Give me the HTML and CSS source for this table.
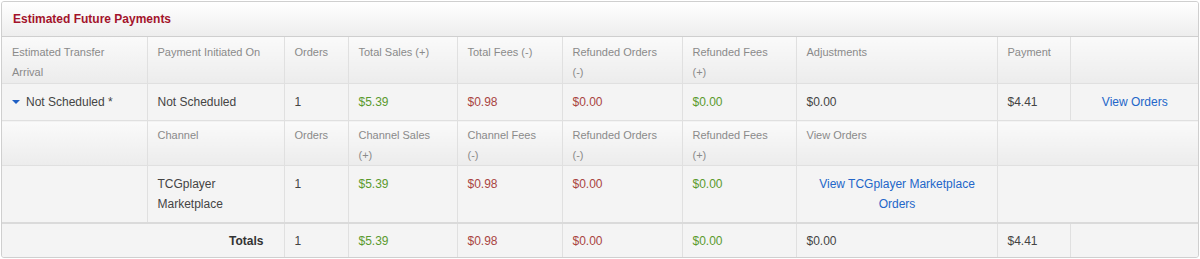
FILE: index.html
```html
<!DOCTYPE html>
<html>
<head>
<meta charset="utf-8">
<link rel="stylesheet" href="styles.css">
</head>
<body>
<div class="panel">
  <div class="panel-heading">Estimated Future Payments</div>
  <table class="payments">
    <colgroup>
      <col class="c1"><col class="c2"><col class="c3"><col class="c4"><col class="c5">
      <col class="c6"><col class="c7"><col class="c8"><col class="c9"><col class="c10">
    </colgroup>
    <tr class="head">
      <th>Estimated Transfer Arrival</th>
      <th>Payment Initiated On</th>
      <th>Orders</th>
      <th>Total Sales (+)</th>
      <th>Total Fees (-)</th>
      <th>Refunded Orders (-)</th>
      <th>Refunded Fees (+)</th>
      <th>Adjustments</th>
      <th>Payment</th>
      <th></th>
    </tr>
    <tr class="row">
      <td><span class="caret"></span>Not Scheduled *</td>
      <td>Not Scheduled</td>
      <td>1</td>
      <td class="pos">$5.39</td>
      <td class="neg">$0.98</td>
      <td class="neg">$0.00</td>
      <td class="pos">$0.00</td>
      <td>$0.00</td>
      <td>$4.41</td>
      <td class="center"><a class="link" href="#">View Orders</a></td>
    </tr>
    <tr class="head sub">
      <th></th>
      <th>Channel</th>
      <th>Orders</th>
      <th>Channel Sales (+)</th>
      <th>Channel Fees (-)</th>
      <th>Refunded Orders (-)</th>
      <th>Refunded Fees (+)</th>
      <th>View Orders</th>
      <th colspan="2"></th>
    </tr>
    <tr class="row">
      <td></td>
      <td>TCGplayer Marketplace</td>
      <td>1</td>
      <td class="pos">$5.39</td>
      <td class="neg">$0.98</td>
      <td class="neg">$0.00</td>
      <td class="pos">$0.00</td>
      <td class="center"><a class="link" href="#">View TCGplayer Marketplace Orders</a></td>
      <td colspan="2"></td>
    </tr>
    <tr class="row totals">
      <td colspan="2" class="total-label">Totals</td>
      <td>1</td>
      <td class="pos">$5.39</td>
      <td class="neg">$0.98</td>
      <td class="neg">$0.00</td>
      <td class="pos">$0.00</td>
      <td>$0.00</td>
      <td>$4.41</td>
      <td></td>
    </tr>
  </table>
</div>
</body>
</html>
```

FILE: styles.css
```css
html, body {
  margin: 0;
  padding: 0;
  background: #ffffff;
}

body {
  font-family: "Liberation Sans", Arial, sans-serif;
  color: #444;
  padding: 1px;
}

.panel {
  width: 1196px;
  border: 1px solid #cfcfcf;
  border-radius: 3px;
  background: #f4f4f4;
  overflow: hidden;
}

.panel-heading {
  padding: 7px 11px;
  line-height: 20px;
  font-size: 12px;
  font-weight: bold;
  color: #a3132b;
  background: linear-gradient(#ffffff, #eeeeee);
  border-bottom: 1px solid #cfcfcf;
}

.payments {
  width: 100%;
  border-collapse: collapse;
  table-layout: fixed;
}

.c1 { width: 145px; }
.c2 { width: 137px; }
.c3 { width: 64px; }
.c4 { width: 109px; }
.c5 { width: 105px; }
.c6 { width: 120px; }
.c7 { width: 114px; }
.c8 { width: 201px; }
.c9 { width: 73px; }
.c10 { width: auto; }

.payments th,
.payments td {
  border: 1px solid #e0e0e0;
  text-align: left;
  vertical-align: top;
  line-height: 20px;
}

.payments tr > :first-child { border-left: none; }
.payments tr > :last-child { border-right: none; }
.payments tr:first-child > * { border-top: none; }
.payments tr:last-child > * { border-bottom: none; }

.payments th {
  padding: 5px 22px 1px 10px;
  font-size: 11px;
  font-weight: normal;
  color: #8a8a8a;
  background: linear-gradient(#fafafa, #ececec);
}

.payments .sub th {
  padding-top: 4px;
  padding-bottom: 0;
}

.payments td {
  padding: 8px 9px 8px 10px;
  font-size: 12px;
  color: #444;
  background: #f4f4f4;
}

.payments .pos { color: #5a9a2e; }
.payments .neg { color: #a94442; }
.payments .center { text-align: center; }

.link {
  color: #2366c9;
  text-decoration: none;
}

.caret {
  display: inline-block;
  width: 0;
  height: 0;
  border-top: 4px solid #1f5fc4;
  border-left: 4px solid transparent;
  border-right: 4px solid transparent;
  vertical-align: middle;
  margin: -2px 6px 0 0;
}

.payments .totals > td {
  border-top: 2px solid #dadada;
  padding-top: 7px;
  padding-bottom: 6px;
}

.payments .total-label {
  text-align: right;
  font-weight: bold;
  color: #333;
  padding-right: 20px;
}
```
